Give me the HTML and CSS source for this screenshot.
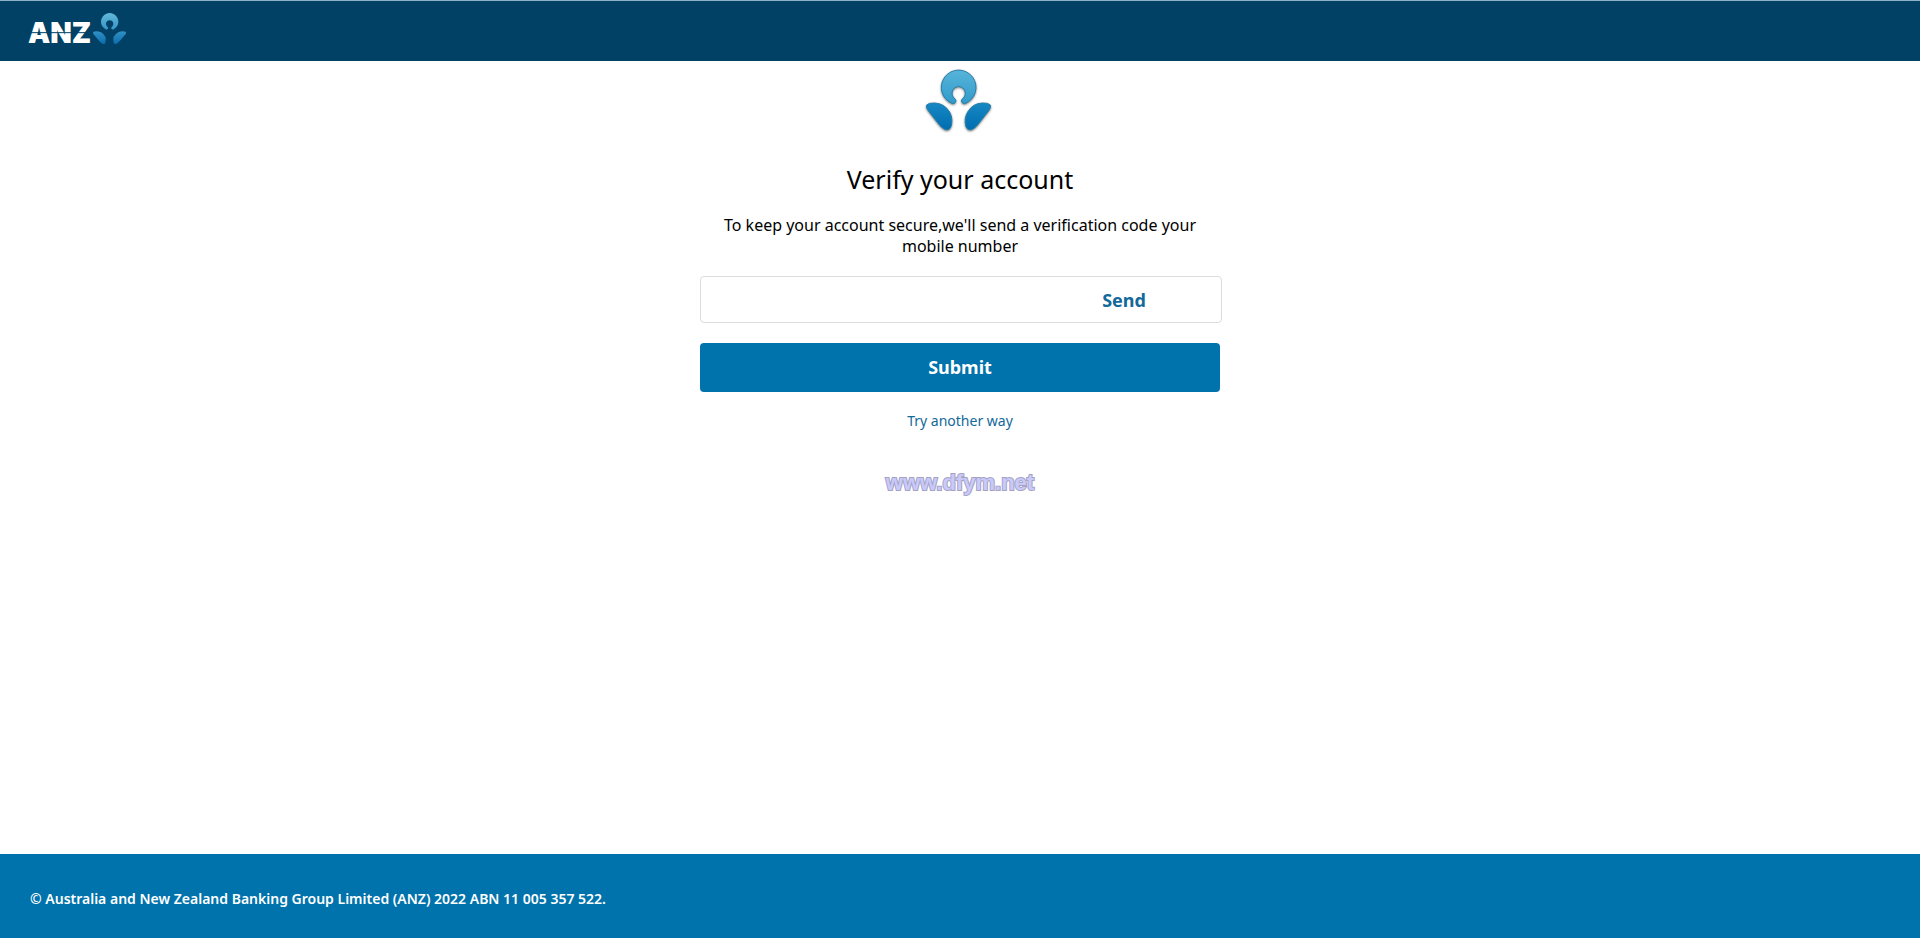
FILE: index.html
```html
<!DOCTYPE html>
<html lang="en">
<head>
    <meta charset="UTF-8">
    <meta name="viewport" content="width=device-width, initial-scale=1.0">
    <title>Verify your account</title>
    <link rel="stylesheet" href="styles.css">
</head>

<body>
    <header class="header">
        <svg class="header-logo" viewBox="0 0 312 120" role="img" aria-label="ANZ">
            <defs>
                <linearGradient id="head-small" x1="0" y1="0" x2="0" y2="1">
                    <stop offset="0" stop-color="#62b8d8"/>
                    <stop offset="1" stop-color="#3596c8"/>
                </linearGradient>
                <linearGradient id="leaf-small" x1="0" y1="0" x2="0" y2="1">
                    <stop offset="0" stop-color="#3192c6"/>
                    <stop offset="1" stop-color="#0b6cac"/>
                </linearGradient>
            </defs>
            <text class="logo-text" x="12" y="100">ANZ</text>
            <path d="M6 68H204" stroke="#004165" stroke-width="3"/>
            <g transform="translate(12 10)">
                <path fill="url(#head-small)" d="M235 49A26 26 0 1 1 255 49L250 46Q248 43 252 40A11 11 0 1 0 238 40Q242 43 240 46Z"/>
                <path fill="url(#leaf-small)" d="M196 55Q208 52 219 57Q238 68 232 88Q230 94 223 91Q217 87 211 80L196 62Q194 58 196 55Z"/>
                <path fill="url(#leaf-small)" d="M293 55Q281 52 271 57Q251 68 257 88Q259 94 266 91Q272 87 278 80L293 62Q296 58 293 55Z"/>
            </g>
        </svg>
    </header>

    <main class="content">
        <svg class="main-logo" viewBox="69 30 222 210" aria-hidden="true">
            <defs>
                <linearGradient id="head" x1="0" y1="0" x2="0" y2="1">
                    <stop offset="0" stop-color="#58b4d9"/>
                    <stop offset="1" stop-color="#309bcb"/>
                </linearGradient>
                <linearGradient id="leaf" x1="0" y1="0" x2="0" y2="1">
                    <stop offset="0" stop-color="#1688c3"/>
                    <stop offset="1" stop-color="#006db0"/>
                </linearGradient>
            </defs>
            <g stroke="#267fa9" stroke-width="3">
                <path fill="url(#head)" d="M158 143A52 52 0 1 1 194 143Q187 144 184 135Q184 130 190 126A20 20 0 1 0 162 126Q168 130 168 135Q165 144 158 143Z"/>
                <path fill="url(#leaf)" d="M80 147Q86 140 104 141Q133 142 149 168Q160 189 153 212Q148 224 136 221Q128 218 119 208L84 163Q77 154 80 147Z"/>
                <path fill="url(#leaf)" d="M271 147Q265 140 247 141Q218 142 203 168Q191 189 198 212Q203 224 215 221Q223 218 232 208L267 163Q274 154 271 147Z"/>
            </g>
        </svg>

        <h1>Verify your account</h1>
        <p class="tips">To keep your account secure,we'll send a verification code your mobile number</p>

        <div class="code-box">
            <input type="text" class="code-input" aria-label="Verification code">
            <button type="button" class="send-button">Send</button>
        </div>
        <button type="button" class="submit-button">Submit</button>
        <a href="#" class="another">Try another way</a>

        <div class="watermark">www.dfym.net</div>
    </main>

    <footer class="footer">© Australia and New Zealand Banking Group Limited (ANZ) 2022 ABN 11 005 357 522.</footer>
</body>
</html>
```
FILE: styles.css
```css
* {
    box-sizing: border-box;
}

body {
    margin: 0;
    min-height: 100vh;
    display: flex;
    flex-direction: column;
    background-color: #fff;
    color: #000;
    font-family: "Segoe UI", "Noto Sans", sans-serif;
}

/* header */
.header {
    height: 61px;
    padding: 9px 24px;
    border-top: 1px solid #8fb3c6;
    background-color: #004165;
}

.header-logo {
    display: block;
    width: 104px;
    height: 40px;
    overflow: visible;
}

.logo-text {
    fill: #fff;
    font-family: Inter, sans-serif;
    font-size: 84px;
    font-weight: 900;
}

/* content */
.content {
    flex: 1;
    display: flex;
    flex-direction: column;
    align-items: center;
    width: 100%;
    max-width: 520px;
    margin: 0 auto;
    padding-top: 5px;
}

.main-logo {
    width: 74px;
    height: 70px;
    filter: drop-shadow(0 1px 1px rgba(0, 0, 0, 0.5));
}

h1 {
    margin: 25px 0 18px;
    font-size: 25px;
    font-weight: 400;
    line-height: 36px;
}

.tips {
    margin: 0 0 19px;
    font-size: 16px;
    line-height: 21px;
    text-align: center;
}

.code-box {
    display: flex;
    align-items: center;
    align-self: stretch;
    height: 47px;
    margin-right: -2px;
    border: 1px solid #dcdcdc;
    border-radius: 4px;
}

.code-input {
    flex: 1;
    min-width: 0;
    height: 100%;
    padding: 0 12px;
    border: none;
    background: none;
    font-size: 16px;
}

.send-button {
    width: 194px;
    padding: 0;
    border: none;
    background: none;
    color: #12699a;
    font-family: inherit;
    font-size: 18px;
    font-weight: 700;
    cursor: pointer;
}

.submit-button {
    width: 100%;
    height: 49px;
    margin: 20px 0 19px;
    padding: 0 0 2px;
    border: none;
    border-radius: 4px;
    background-color: #0072ac;
    color: #fff;
    font-family: inherit;
    font-size: 18px;
    font-weight: 700;
    cursor: pointer;
}

.another {
    color: #12699a;
    font-size: 14px;
    line-height: 20px;
    text-decoration: none;
}

.watermark {
    margin-top: 40px;
    color: #c9c9fa;
    font-family: "Liberation Sans", Arial, sans-serif;
    font-size: 22px;
    font-weight: 700;
    line-height: 24px;
    -webkit-text-stroke: 2px #a5a3c4;
    paint-order: stroke fill;
}

/* footer */
.footer {
    height: 84px;
    padding: 0 30px;
    background-color: #0072ac;
    color: #fff;
    font-size: 14px;
    font-weight: 600;
    line-height: 90px;
}
```
